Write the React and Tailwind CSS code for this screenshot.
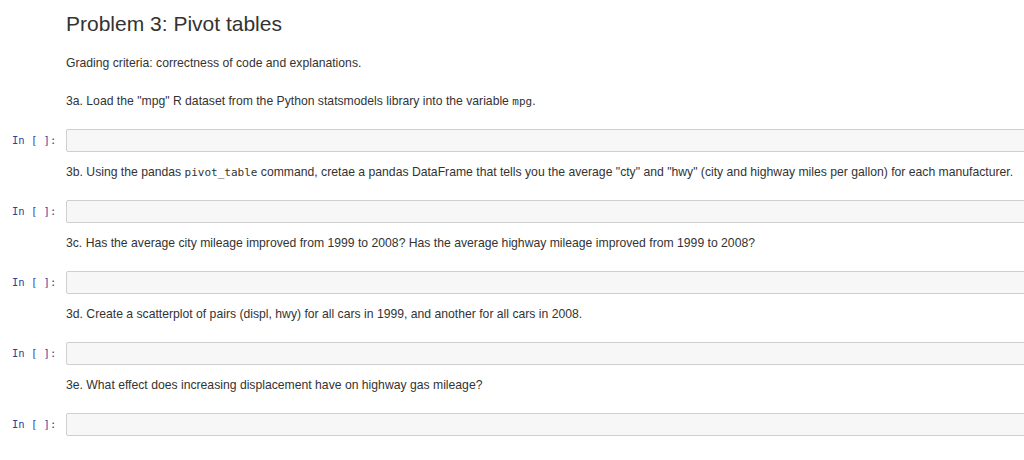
import React from 'react';

const sans = { fontFamily: '"Liberation Sans", Arial, sans-serif' };

function Code({ children }) {
  return <code className="font-['DejaVu_Sans_Mono',monospace] text-[11px] leading-none text-[#333]">{children}</code>;
}

function InputCell() {
  return (
    <div className="flex items-center h-[23px]">
      <div className="w-[66px] shrink-0 pl-[12px] font-['DejaVu_Sans_Mono',monospace] text-[10.5px] text-[#303f9f]">
        In [ ]:
      </div>
      <div className="flex-1 h-[23px] -mr-[4px] bg-[#f7f7f7] border border-[#cfcfcf] rounded-[2px]" />
    </div>
  );
}

function Prompt({ children }) {
  return (
    <p className="pl-[66px] text-[12.2px] leading-[16px] text-[#333]">{children}</p>
  );
}

export default function App() {
  const tasks = [
    <>3b. Using the pandas <Code>pivot_table</Code> command, cretae a pandas DataFrame that tells you the average "cty" and "hwy" (city and highway miles per gallon) for each manufacturer.</>,
    <>3c. Has the average city mileage improved from 1999 to 2008? Has the average highway mileage improved from 1999 to 2008?</>,
    <>3d. Create a scatterplot of pairs (displ, hwy) for all cars in 1999, and another for all cars in 2008.</>,
    <>3e. What effect does increasing displacement have on highway gas mileage?</>,
  ];

  return (
    <div className="w-[1024px] h-[460px] overflow-hidden bg-white" style={sans}>
      <h1 className="pl-[66px] pt-[10px] text-[21px] leading-[28px] text-[#333]">Problem 3: Pivot tables</h1>
      <p className="pl-[66px] mt-[17px] text-[12.2px] leading-[16px] text-[#333]">
        Grading criteria: correctness of code and explanations.
      </p>
      <p className="pl-[66px] mt-[22px] text-[12.2px] leading-[16px] text-[#333]">
        3a. Load the "mpg" R dataset from the Python statsmodels library into the variable <Code>mpg</Code>.
      </p>
      <div className="mt-[20px]">
        <InputCell />
      </div>
      {tasks.map((t, i) => (
        <div key={i}>
          <div className="mt-[12px]">
            <Prompt>{t}</Prompt>
          </div>
          <div className="mt-[20px]">
            <InputCell />
          </div>
        </div>
      ))}
    </div>
  );
}
